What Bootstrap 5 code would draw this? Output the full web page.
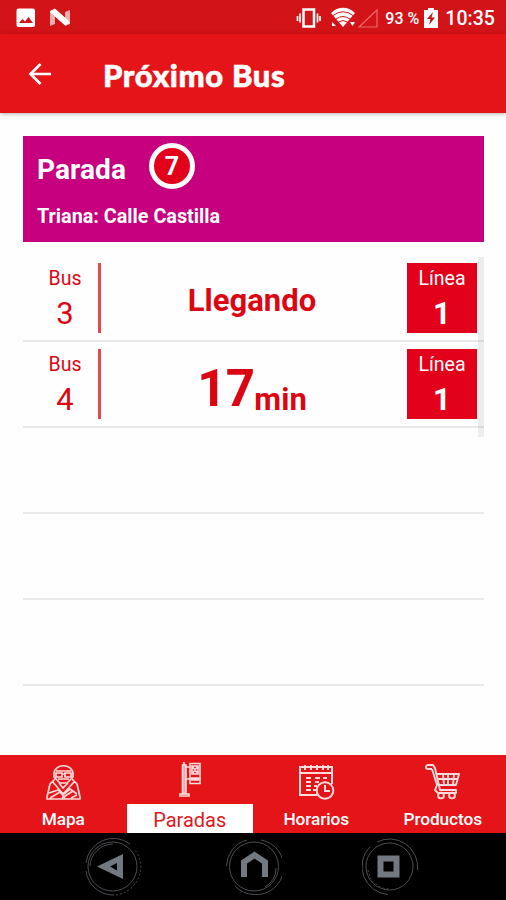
<!DOCTYPE html>
<html lang="es">
<head>
<meta charset="utf-8">
<meta name="viewport" content="width=device-width, initial-scale=1">
<title>Próximo Bus</title>
<link href="https://cdn.jsdelivr.net/npm/bootstrap@5.3.0/dist/css/bootstrap.min.css" rel="stylesheet">
<style>
body{font-family:Roboto,"Liberation Sans",sans-serif;background:#fefefe;line-height:1}
svg{display:block;flex:none}
.phone{width:506px;height:900px}
.status-bar{height:34px;background:#d21317;padding:2px 11px 0 16px}
.clock{font-size:19.5px;letter-spacing:.05px;font-weight:500;padding-top:1px}
.charge{font-size:16px;font-weight:500}
.app-bar{height:79px;background:#e51419;padding:0 28px;box-shadow:0 1px 4px rgba(0,0,0,.3)}
.app-title{font-family:Lato,sans-serif;font-size:31px;font-weight:900;letter-spacing:.65px;margin:2px 0 0 50px;line-height:36px;-webkit-text-stroke:.6px #fff}
.board{margin:23px 22px 0 23px}
.stop-head{height:106px;background:#c6007e;padding:7px 14px 0}
.stop-word{font-size:28px;font-weight:700;line-height:32px;width:89px;letter-spacing:.1px}
.stop-num{width:46px;height:46px;border:5px solid #fff;background:#e2001a;font-size:25px;font-weight:700;margin-left:23px}
.stop-name{font-size:19.8px;font-weight:700;line-height:24px;margin-top:16px}
.arrivals{padding-top:14px}
.arrival{height:86px;border-bottom:2px solid #e9e9e9;padding:7px 7px 0 8px;color:#dc0612}
.bus-cell{width:70px;height:70px;border-right:3px solid #e04a50;padding:5px 0 0 1px}
.line-cell{width:70px;height:70px;background:#e2001a;padding-top:5px}
.cell-label{font-size:19.5px;line-height:22px}
.cell-num{font-size:31px;line-height:36px;margin-top:6px}
.wait{font-size:31px;font-weight:700;height:70px;padding-right:4px}
.wait-num{font-size:51px;margin-top:14px;letter-spacing:-.7px}
.wait-unit{transform:translateY(4px)}
.scroll-thumb{right:0;top:15px;width:6px;height:180px;background:rgba(0,0,0,.065)}
.tabs{height:78px;background:#e51419}
.tab-pic{height:49px}
.tab-text{height:29px;font-size:17.3px;font-weight:500;padding-top:3px;letter-spacing:-.1px}
.tab-on{background:#fff;color:#df1820;font-weight:400;font-size:20px;padding-top:2px;letter-spacing:0}
.sys-bar{height:67px;background:#000;padding:0 86px 0 85px}
</style>
</head>
<body>
<div class="phone d-flex flex-column overflow-hidden">
  <header>
    <div class="status-bar d-flex align-items-center text-white">
      <svg width="20" height="20" viewBox="0 0 20 20"><rect x=".5" y=".5" width="18.500" height="18.500" rx="2" fill="#fff"/><path d="M3 15l3.500-4 2.500 2.500L12.500 9 17 15z" fill="#d21317"/></svg>
      <svg style="margin-left:13px" class="me-auto" width="22" height="20" viewBox="0 0 22 20"><path d="M1 4l5-2v14l-5 2zM16 4l5-2v14l-5 2z" fill="#fff" opacity=".65"/><path d="M1 3.500L6 1l15 13.500-5 2.500z" fill="#fff" stroke="#fff"/></svg>
      <svg width="28" height="22" viewBox="0 0 28 22"><path d="M8.500 2.500h10.500v17H8.500z" fill="none" stroke="#fff" stroke-width="2.500"/><path d="M5 6.500v9M2.500 9v5M22.500 6.500v9M25 9v5" stroke="#fff" stroke-width="1.700"/></svg>
      <svg style="margin-left:7px" width="26" height="22" viewBox="0 0 26 22"><path d="M1 6C8-1 18-1 25 6L13 20z" fill="#fff"/><path d="M3 8.500Q13 1 23 8.500M6 12Q13 7 20 12M8.500 15Q13 12 17.500 15" fill="none" stroke="#d21317" stroke-width="1"/><path d="M2 19v-4l4 4zM20 15h5l-2.500 4z" fill="#fff"/></svg>
      <svg style="margin-left:1px" width="22" height="21" viewBox="0 0 22 21"><path d="M2 19L20 2v17z" fill="none" stroke="#ec6a6c" stroke-width="1.200"/></svg>
      <span class="charge" style="margin:1px 0 0 6px">93 %</span>
      <svg style="margin-left:5px" width="14" height="20" viewBox="0 0 14 20"><path d="M4 0h6v2h4v18H0V2h4z" fill="#fff"/><path d="M9 4l-6 7h3.500L5 17l6-7.500H7.500z" fill="#c91216"/></svg>
      <span class="clock" style="margin-left:7px">10:35</span>
    </div>
    <div class="app-bar d-flex align-items-center text-white">
      <svg width="25" height="24" viewBox="0 0 25 24"><path d="M23 12H3M12.500 2L2.500 12l10 10" fill="none" stroke="#fff" stroke-width="2.700"/></svg>
      <h1 class="app-title mb-0">Próximo Bus</h1>
    </div>
  </header>
  <main class="board flex-grow-1">
    <section class="stop-head text-white">
      <div class="d-flex align-items-center">
        <span class="stop-word pt-2">Parada</span>
        <span class="stop-num rounded-circle d-flex align-items-center justify-content-center">7</span>
      </div>
      <div class="stop-name">Triana: Calle Castilla</div>
    </section>
    <section class="arrivals position-relative">
      <div class="arrival d-flex">
        <div class="bus-cell text-center"><div class="cell-label">Bus</div><div class="cell-num">3</div></div>
        <div class="wait flex-grow-1 d-flex align-items-center justify-content-center pt-1">Llegando</div>
        <div class="line-cell text-center text-white"><div class="cell-label">Línea</div><div class="cell-num fw-bold">1</div></div>
      </div>
      <div class="arrival d-flex">
        <div class="bus-cell text-center"><div class="cell-label">Bus</div><div class="cell-num">4</div></div>
        <div class="wait flex-grow-1 d-flex align-items-baseline justify-content-center"><span class="wait-num">17</span><span class="wait-unit">min</span></div>
        <div class="line-cell text-center text-white"><div class="cell-label">Línea</div><div class="cell-num fw-bold">1</div></div>
      </div>
      <div class="arrival"></div>
      <div class="arrival"></div>
      <div class="arrival"></div>
      <div class="scroll-thumb position-absolute"></div>
    </section>
  </main>
  <nav class="tabs row g-0 text-white text-center">
    <div class="col-3">
      <div class="tab-pic d-flex justify-content-center"><svg style="margin-top:9px" width="36" height="37" viewBox="0 0 36 37" fill="none" stroke="#ffdcdc" stroke-width="1.700" stroke-linejoin="round"><path d="M9 13v-3C9-1 28-1 28 10v3l-3 3-3 3h-7l-3-3zM11 7h15M11 9h6v4h-6zM20 9h6v4h-6zM17 10h3M13 15h11"/><path d="M10 15L5 20 2 33v2h33v-2l-3-13-5-5M7 17l11 13 12-13M14 19l4 5 5-5M4 29l9-3 6 4 6-5 7 5M5 34l10-6 5 6M17 34l11-7M26 34l6-3"/></svg></div>
      <div class="tab-text d-flex align-items-center justify-content-center">Mapa</div>
    </div>
    <div class="col-3">
      <div class="tab-pic d-flex justify-content-center"><svg style="margin-top:7px" width="24" height="38" viewBox="0 0 24 38" fill="none" stroke="#ffdcdc" stroke-width="1.600"><path d="M4.500 3h3.500v28.500H4.500z" fill="#f6a6a7"/><path d="M6 0v3M2 32h9v2H2zM8 5h4M8 17h4M12 1.500h10v20H12zM14 4h6v8h-6zM14 4l3 4 3-4M14 12l3-4 3 4"/><path d="M13.500 16h7v2h-7z" fill="#ffdcdc"/></svg></div>
      <div class="tab-text tab-on d-flex align-items-center justify-content-center">Paradas</div>
    </div>
    <div class="col-3">
      <div class="tab-pic d-flex justify-content-center"><svg style="margin-top:9px" width="37" height="37" viewBox="0 0 37 37" fill="none" stroke="#ffdcdc" stroke-width="2"><path d="M20 31H2V3h32v17M2 9h32M7 1v5M13 1v5M19 1v5M25 1v5M30 1v5"/><path d="M8 14h5M17 14h5M25 14h4M8 18h5M17 18h4M8 22h5M16 22h3M8 26h5M15 26h3"/><circle cx="27" cy="26.500" r="8.300"/><path d="M27 21v6h5"/></svg></div>
      <div class="tab-text d-flex align-items-center justify-content-center">Horarios</div>
    </div>
    <div class="col-3">
      <div class="tab-pic d-flex justify-content-center"><svg style="margin-top:9px" width="37" height="37" viewBox="0 0 37 37" fill="none" stroke="#ffdcdc" stroke-width="1.900" stroke-linejoin="round"><path d="M8 5H4a2 2 0 0 1 0-4h5l2 3 5 22h16v3H14l-3-3 2-5L8 5M12 10h23l-3 11H15M13 15h20M19 10l1 11M24 10v11M30 10l-1 11"/><circle cx="17" cy="31.500" r="2.900"/><circle cx="28" cy="31.500" r="2.900"/></svg></div>
      <div class="tab-text d-flex align-items-center justify-content-center">Productos</div>
    </div>
  </nav>
  <footer class="sys-bar d-flex align-items-center justify-content-between">
    <svg width="58" height="58" viewBox="0 0 58 58" fill="none" stroke="#4c4e52"><circle cx="27.500" cy="28.500" r="24.500"/><path d="M5 28A23 23 0 0 1 28 6M1 25A27.500 27.500 0 0 1 45 6M1 33A27.500 27.500 0 0 0 27 57"/><path d="M27 57A28 28 0 0 0 50 12" stroke-dasharray="2 2"/><path d="M38 16v25L12 28.500zM32 25l-7 3.500 7 4z" fill="#737980" fill-rule="evenodd" stroke="none"/></svg>
    <svg width="58" height="58" viewBox="-2 0 58 58" fill="none" stroke="#4c4e52"><circle cx="28" cy="28.500" r="24.500"/><path d="M.5 28A27.500 27.500 0 0 1 21 2M35 2A27.500 27.500 0 0 1 28 56.500M9 48A27.500 27.500 0 0 0 28 56.500M50 30A22 22 0 0 1 39 49"/><path d="M18 39V24l10.500-7L39 24v15" stroke="#737980" stroke-width="6"/></svg>
    <svg width="58" height="58" viewBox="0 0 58 58" fill="none" stroke="#4c4e52"><circle cx="27.500" cy="28.500" r="23.500"/><path d="M26 56.500A28 28 0 0 1 8 9M15 4A28 28 0 0 1 55.500 32"/><path d="M6 32A22 22 0 0 0 27 51" stroke-dasharray="2 2"/><path d="M18.500 20.500h16v16h-16z" stroke="#737980" stroke-width="6"/></svg>
  </footer>
</div>
<script src="https://cdn.jsdelivr.net/npm/bootstrap@5.3.0/dist/js/bootstrap.bundle.min.js"></script>
</body>
</html>
